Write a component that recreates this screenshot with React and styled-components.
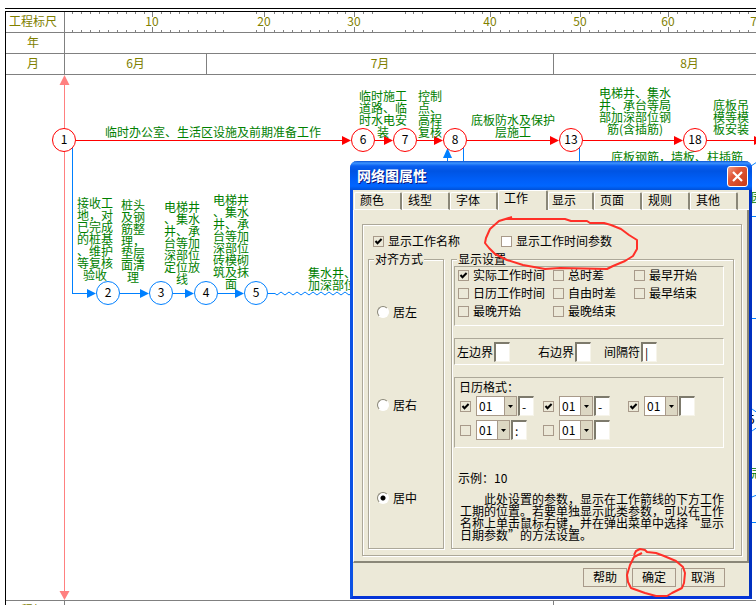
import React from "react";
import styled, { createGlobalStyle, css } from "styled-components";

const GlobalStyle = createGlobalStyle`
  * { box-sizing: border-box; }
  body {
    margin: 0;
    overflow: hidden;
    background: #fff;
    color: #000;
    font: 12px/12px "Noto Sans CJK SC", sans-serif;
  }
  button, input, select { font: inherit; color: inherit; margin: 0; padding: 0; }
`;

const GREY = "#808080";
const OLIVE = "#808000";
const GREEN = "#008000";
const RED = "#ff0000";
const BLUE = "#0080ff";
const PINK = "#ff8080";
const FACE = "#ece9d8";
const SHADE = "#aca899";

/* ---------- Chart sheet ---------- */

const Page = styled.main`
  position: relative;
  height: 100vh;
  overflow: hidden;
  padding: 8px 0 0 5px;
`;

const Sheet = styled.section`
  border-top: 1px solid #000;
  padding-top: 2px;
`;

const SheetFrame = styled.div`
  border-top: 1px solid #000;
  border-left: 1px solid #000;
`;

const ScaleRow = styled.div`
  display: grid;
  grid-template-columns: 59px minmax(0, 1fr);
  height: 21px;
  border-bottom: 1px solid ${GREY};
  color: ${OLIVE};
`;

const FooterRow = styled(ScaleRow)`
  border-top: 1px solid ${GREY};
`;

const ScaleName = styled.div`
  display: flex;
  align-items: center;
  justify-content: center;
  padding: 0 4px 2px 0;
  border-right: 1px solid ${GREY};
`;

const ScaleBody = styled.div`
  display: flex;
  overflow: hidden;
`;

const Month = styled.div`
  flex: 0 0 ${(p) => p.$width}px;
  display: flex;
  align-items: center;
  justify-content: center;
  padding-bottom: 2px;
  border-right: ${(p) => (p.$open ? "0" : `1px solid ${GREY}`)};
`;

const Ruler = styled.svg`
  display: block;
  flex: none;
  fill: ${OLIVE};
`;

const Canvas = styled.div`
  position: relative;
  height: 525px;
  overflow: hidden;
`;

const Network = styled.svg`
  display: block;
  font-size: 12px;
`;

const TaskLabel = styled.div`
  position: absolute;
  left: ${(p) => p.$x - 6}px;
  top: ${(p) => p.$y - 75}px;
  width: ${(p) => p.$w}px;
  color: ${GREEN};
  text-align: center;
  white-space: pre;
`;

const MAJORS = { 152: "10", 264: "20", 354: "30", 490: "40", 580: "50", 668: "60", 757: "70" };
const TICKS = [
  72, 81, 90, 99, 108, 117, 126, 135, 144, 152, 161, 170, 179, 188, 197, 206, 215, 223,
  256, 264, 274, 283, 292, 301, 310, 319, 328, 337, 345, 354, 363, 372, 405, 413, 422,
  455, 464, 473, 482, 490, 500, 509, 518, 527, 536, 545, 554, 563, 571, 580, 589, 598,
  606, 615, 624, 633, 642, 651, 660, 668, 677, 686, 694, 703, 712, 721, 730, 739, 748,
];

const TASKS = [
  [105, 126, 216, "临时办公室、生活区设施及前期准备工作"],
  [359, 90, 48, "临时施工\n道路、临\n时水电安\n装"],
  [418, 90, 24, "控制\n点、\n高程\n复核"],
  [471, 114, 84, "底板防水及保护\n层施工"],
  [599, 87, 72, "电梯井、集水\n井、承台等局\n部加深部位钢\n筋(含插筋)"],
  [713, 99, 36, "底板吊\n模等模\n板安装"],
  [611, 151, 132, "底板钢筋，墙板、柱插筋"],
  [77, 197, 36, "接收工\n地，对\n已完成\n的桩基\n、维护\n等复核\n验收"],
  [121, 199, 24, "桩头\n及钢\n筋整\n理，\n垫层\n面清\n理"],
  [164, 201, 36, "电梯井\n、集水\n井、承\n台等加\n深部位\n定位放\n线"],
  [213, 194, 36, "电梯井\n、集水\n井、承\n台等加\n深部位\n砖模砌\n筑及抹\n面"],
  [308, 267, 48, "集水井、\n加深部位"],
  [751, 191, 12, "园"],
  [751, 467, 12, "冠"],
];

const NODES = [
  [64, 140, "1", RED], [363, 140, "6", RED], [405, 140, "7", RED], [455, 140, "8", RED],
  [571, 140, "13", RED], [695, 140, "18", RED],
  [108, 293, "2", BLUE], [161, 293, "3", BLUE], [206, 293, "4", BLUE], [256, 293, "5", BLUE],
  [748, 420, "25", BLUE],
];

const ARROWS = [
  [76, 351, 140, RED], [375, 393, 140, RED], [417, 443, 140, RED], [467, 559, 140, RED],
  [583, 683, 140, RED], [707, 763, 140, RED],
  [72, 96, 293, BLUE], [120, 149, 293, BLUE], [173, 194, 293, BLUE], [218, 244, 293, BLUE],
];

const wave = (from, to) => {
  let d = `M268 293.5H${from}`;
  for (let x = from; x < to; x += 8) d += "q2 3 4 0t4 0";
  return d;
};

function NetworkChart() {
  return (
    <Network width="750" height="525" viewBox="6 75 750 525">
      <g fill="none" stroke={BLUE}>
        <path d="M72.5 148V293.5M463.5 148V200M579.5 148V200M447.5 157V200" />
        <path d={wave(275, 350)} />
        <path d="M748 168L757 162M748 216.5H757M748 318.5H757M748 498.5L757 495M748 522.5H757" />
      </g>
      <path d="M447.5 148L452 158H443Z" fill={BLUE} />
      <path d="M64.5 80V595" stroke={PINK} />
      <path d="M64.5 75L69.5 85H59.5ZM64.5 600L69.5 591H59.5Z" fill={PINK} />
      {ARROWS.map(([from, to, y, color]) => (
        <g key={`${from}-${y}`}>
          <path d={`M${from} ${y + 0.5}H${to - 4}`} stroke={color} />
          <path d={`M${to} ${y + 0.5}L${to - 9} ${y - 4}V${y + 5}Z`} fill={color} />
        </g>
      ))}
      {NODES.map(([x, y, name, color]) => (
        <g key={`${x}-${y}`}>
          <circle cx={x} cy={y} r="11.5" fill="#fff" stroke={color} />
          <text x={x} y={y + 4} textAnchor="middle">{name}</text>
        </g>
      ))}
    </Network>
  );
}

function Schedule() {
  return (
    <Sheet>
      <SheetFrame>
        <ScaleRow>
          <ScaleName>工程标尺</ScaleName>
          <ScaleBody>
            <Ruler width="700" height="20" viewBox="65 12 700 20">
              {TICKS.map((x) => (
                <path
                  key={x}
                  stroke={GREY}
                  d={MAJORS[x] ? `M${x + 0.5} 12v5m0 10v5` : `M${x + 0.5} 12v2m0 16v2`}
                />
              ))}
              {Object.entries(MAJORS).map(([x, name]) => (
                <text key={x} x={x} y="26" textAnchor="middle">{name}</text>
              ))}
            </Ruler>
          </ScaleBody>
        </ScaleRow>
        <ScaleRow>
          <ScaleName>年</ScaleName>
          <ScaleBody />
        </ScaleRow>
        <ScaleRow>
          <ScaleName>月</ScaleName>
          <ScaleBody>
            <Month $width={142}>6月</Month>
            <Month $width={347}>7月</Month>
            <Month $width={271} $open>8月</Month>
          </ScaleBody>
        </ScaleRow>
        <Canvas>
          <NetworkChart />
          {TASKS.map(([x, y, w, text]) => (
            <TaskLabel key={`${x}-${y}`} $x={x} $y={y} $w={w}>{text}</TaskLabel>
          ))}
        </Canvas>
        <FooterRow>
          <ScaleName>工程标尺</ScaleName>
          <ScaleBody>
            <Month $width={489} />
          </ScaleBody>
        </FooterRow>
      </SheetFrame>
    </Sheet>
  );
}

/* ---------- Dialog ---------- */

const Dialog = styled.section`
  position: absolute;
  isolation: isolate;
  left: 350px;
  top: 161px;
  width: 402px;
  border: 3px solid #0b51e4;
  border-top: 0;
  border-right-color: #0030c0;
  border-bottom-color: #0434d8;
  border-radius: 7px 7px 0 0;
  background: ${FACE};
`;

const TitleBar = styled.header`
  display: flex;
  align-items: center;
  justify-content: space-between;
  height: 29px;
  margin: 0 -3px;
  padding: 2px 4px 0 7px;
  border-radius: 7px 7px 0 0;
  background: linear-gradient(#0a4fd0 0, #3d95ff 2px, #0a5ff0 5px, #0054e3 10px, #0060fa 20px, #0066ff 25px, #0050d8 29px);
`;

const Title = styled.h1`
  margin: 0;
  padding-bottom: 4px;
  color: #fff;
  font-size: 14px;
  line-height: 16px;
  font-weight: 700;
  text-shadow: 1px 1px 0 #0a1883;
`;

const CloseButton = styled.button`
  display: flex;
  align-items: center;
  justify-content: center;
  width: 21px;
  height: 21px;
  border: 1px solid #fff;
  border-radius: 3px;
  background: linear-gradient(135deg, #f0a08a, #e2593a 35%, #c83a14);
`;

const Tabs = styled.nav`
  display: flex;
  align-items: flex-end;
  height: 20px;
  padding-left: 1px;
`;

const Tab = styled.button`
  flex: 0 0 48px;
  height: 18px;
  padding: 0 0 2px 5px;
  text-align: left;
  border: solid #fff;
  border-width: 1px 0 1px 1px;
  border-right: 2px solid #8a8778;
  border-radius: 2px 2px 0 0;
  background: ${FACE};
  ${(p) =>
    p.$active &&
    css`
      height: 20px;
      flex-basis: 50px;
      padding-bottom: 5px;
      border-bottom: 0;
    `}
  ${(p) => p.$narrow && css`flex-basis: 46px; padding-left: 3px;`}
`;

const TabLine = styled.span`
  flex: 1;
  border-bottom: 1px solid #fff;
`;

const TabPanel = styled.div`
  border-right: 2px solid #8a8778;
  border-bottom: 2px solid #8a8778;
  border-left: 1px solid #fff;
  padding: 14px 5px 5px 8px;
`;

const etched = css`
  border: 1px solid ${SHADE};
  box-shadow: inset 1px 1px 0 #fff, 1px 1px 0 #fff;
`;

const GroupBox = styled.div`
  ${etched}
  padding: 8px 7px 6px 5px;
`;

const TopChecks = styled.div`
  display: grid;
  grid-template-columns: 128px 1fr;
  padding-left: 5px;
  height: 19px;
`;

const Columns = styled.div`
  display: grid;
  grid-template-columns: 76px minmax(0, 1fr);
  gap: 7px;
`;

/* The frame is drawn through the middle of the legend, which sits above the padding box. */
const FieldSet = styled.fieldset`
  position: relative;
  min-width: 0;
  height: 297px;
  margin: 0;
  padding: 0 0 0 2px;
  border: 0;
  &::before {
    content: "";
    position: absolute;
    inset: -7px 0 0 0;
    ${etched}
  }
`;

const Legend = styled.legend`
  position: relative;
  z-index: 1;
  margin-left: 4px;
  padding: 0 1px;
  height: 14px;
  line-height: 14px;
  background: ${FACE};
`;

const RadioList = styled.div`
  position: relative;
  display: flex;
  flex-direction: column;
  gap: 77px;
  padding: 38px 0 0 7px;
`;

const Choice = styled.label`
  display: flex;
  align-items: center;
  gap: 4px;
  height: 16px;
  white-space: nowrap;
`;

const Check = styled.input.attrs({ type: "checkbox" })`
  appearance: none;
  flex: none;
  width: 11px;
  height: 11px;
  border: 1px solid #a89a8a;
  background: ${(p) => (p.$white ? "#fff" : FACE)};
  &:checked {
    background: ${FACE}
      url("data:image/svg+xml,%3Csvg xmlns='http://www.w3.org/2000/svg' viewBox='0 0 9 9'%3E%3Cpath d='M1.5 4l2 2.2L7.6 2' fill='none' stroke='black' stroke-width='2'/%3E%3C/svg%3E");
  }
`;

const Radio = styled.input.attrs({ type: "radio" })`
  appearance: none;
  width: 12px;
  height: 12px;
  border: 1px solid;
  border-color: #8a8778 #fff #fff #8a8778;
  border-radius: 50%;
  background: #fff;
  &:checked {
    background: radial-gradient(circle, #000 0 2px, #fff 3px);
  }
`;

const Settings = styled.div`
  position: relative;
  padding: 0 10px 0 1px;
`;

const Inset = styled.div`
  border: 1px solid;
  border-color: ${SHADE} #fff #fff ${SHADE};
`;

const OptionGrid = styled(Inset)`
  display: grid;
  grid-template-columns: 95px 81px 1fr;
  grid-auto-rows: 17px;
  row-gap: 1px;
  height: 60px;
  padding: 0 0 0 3px;
`;

const BoundsRow = styled(Inset)`
  display: flex;
  align-items: center;
  height: 27px;
  margin-top: 12px;
  padding-left: 2px;
`;

const BoundField = styled.label`
  display: flex;
  align-items: center;
  gap: 1px;
  margin-right: ${(p) => p.$after || 0}px;
`;

const TextBox = styled.input`
  width: 16px;
  height: 20px;
  padding-left: 2px;
  border: solid;
  border-width: 2px 1px 1px 2px;
  border-color: #7d7a6c #f6f4ea #f6f4ea #7d7a6c;
  background: #fff;
`;

const CalendarBox = styled(Inset)`
  height: 71px;
  margin-top: 12px;
  padding: 3px 0 0 4px;
`;

const FormatGrid = styled.div`
  display: grid;
  grid-template-columns: 83px 85px 1fr;
  row-gap: 4px;
  margin-top: 3px;
  padding-left: 1px;
`;

const FormatField = styled.div`
  display: flex;
  align-items: center;
  height: 20px;
  gap: 1px;
`;

const SelectBox = styled.span`
  position: relative;
  display: flex;
  width: ${(p) => (p.$wide ? 41 : 34)}px;
  height: 20px;
  margin-left: 4px;
  border: 1px solid #a89a8a;
  background: #fff;
  svg {
    position: absolute;
    right: 0;
    top: 0;
    pointer-events: none;
  }
`;

const Select = styled.select`
  appearance: none;
  width: 100%;
  border: 0;
  padding-left: 2px;
  background: transparent;
  line-height: 16px;
`;

const Example = styled.p`
  margin: 23px 0 0 4px;
  line-height: 14px;
`;

const Note = styled.p`
  margin: 8px 0 0 6px;
  white-space: pre;
`;

const Actions = styled.footer`
  display: flex;
  justify-content: flex-end;
  gap: 5px;
  height: 33px;
  padding: 5px 24px 0 0;
`;

const Button = styled.button`
  width: 44px;
  height: 19px;
  padding-bottom: 1px;
  border: 1px solid #a89a8a;
  background: ${FACE};
`;

const Mark = styled.svg`
  position: absolute;
  left: ${(p) => p.$x}px;
  top: ${(p) => p.$y}px;
  pointer-events: none;
  fill: none;
  stroke: #ff3028;
  stroke-width: 2;
  stroke-linejoin: round;
`;

const OPTIONS = [
  ["实际工作时间", true], ["总时差"], ["最早开始"],
  ["日历工作时间"], ["自由时差"], ["最早结束"],
  ["最晚开始"], ["最晚结束"],
];

const FORMATS = [
  { part: "年", on: true, sep: "-", wide: true },
  { part: "月", on: true, sep: "-" },
  { part: "日", on: true, sep: "" },
  { part: "时", sep: ":" },
  { part: "分", sep: "" },
];

function DateFormat({ part, on, sep, wide }) {
  return (
    <FormatField>
      <Check defaultChecked={on} aria-label={part} />
      <SelectBox $wide={wide}>
        <Select aria-label={`${part}格式`} defaultValue="01">
          <option>01</option>
        </Select>
        <svg width="12" height="18">
          <path d="M0 0H12V18H0Z" fill="#dcd7c3" />
          <path d="M.5 0V18" stroke="#a89a8a" />
          <path d="M4 8H9L6.500 11Z" fill="#000" />
        </svg>
      </SelectBox>
      <TextBox defaultValue={sep} aria-label={`${part}分隔`} />
    </FormatField>
  );
}

function PropertiesDialog() {
  return (
    <Dialog role="dialog" aria-labelledby="dialog-title">
      <TitleBar>
        <Title id="dialog-title">网络图属性</Title>
        <CloseButton aria-label="关闭">
          <svg width="13" height="13">
            <path d="M2 2L11 11M11 2L2 11" stroke="#fff" strokeWidth="2.200" />
          </svg>
        </CloseButton>
      </TitleBar>
      <Tabs>
        <Tab>颜色</Tab>
        <Tab>线型</Tab>
        <Tab>字体</Tab>
        <Tab $active>工作</Tab>
        <Tab $narrow>显示</Tab>
        <Tab>页面</Tab>
        <Tab>规则</Tab>
        <Tab>其他</Tab>
        <TabLine />
      </Tabs>
      <TabPanel>
        <GroupBox>
          <TopChecks>
            <Choice><Check defaultChecked />显示工作名称</Choice>
            <Choice><Check $white />显示工作时间参数</Choice>
          </TopChecks>
          <Columns>
            <FieldSet>
              <Legend>对齐方式</Legend>
              <RadioList>
                <Choice><Radio name="align" />居左</Choice>
                <Choice><Radio name="align" />居右</Choice>
                <Choice><Radio name="align" defaultChecked />居中</Choice>
              </RadioList>
            </FieldSet>
            <FieldSet>
              <Legend>显示设置</Legend>
              <Settings>
                <OptionGrid>
                  {OPTIONS.map(([name, on]) => (
                    <Choice key={name}><Check defaultChecked={on} />{name}</Choice>
                  ))}
                </OptionGrid>
                <BoundsRow>
                  <BoundField $after={28}>左边界<TextBox /></BoundField>
                  <BoundField $after={13}>右边界<TextBox /></BoundField>
                  <BoundField>间隔符<TextBox defaultValue="|" /></BoundField>
                </BoundsRow>
                <CalendarBox>
                  日历格式：
                  <FormatGrid>
                    {FORMATS.map((f) => <DateFormat key={f.part} {...f} />)}
                  </FormatGrid>
                </CalendarBox>
                <Example>示例：10</Example>
                <Note>
                  {"　　此处设置的参数，显示在工作箭线的下方工作\n工期的位置。若要单独显示此类参数，可以在工作\n名称上单击鼠标右键，并在弹出菜单中选择“显示\n日期参数”的方法设置。"}
                </Note>
              </Settings>
            </FieldSet>
          </Columns>
        </GroupBox>
      </TabPanel>
      <Actions>
        <Button>帮助</Button>
        <Button>确定</Button>
        <Button>取消</Button>
      </Actions>
    </Dialog>
  );
}

export default function App() {
  return (
    <>
      <GlobalStyle />
      <Page>
        <Schedule />
        <PropertiesDialog />
        <Mark $x={480} $y={210} width="165" height="65" viewBox="480 210 165 65">
          <path d="M512 217L499 221L490 229L486 238L485 243L489 248L495 254L507 260L523 265L545 269L560 268L607 269L613 266L625 261L633 256L637 249L637 240L629 235L621 229L611 225L604 223L590 223L587 221L571 221L565 219H506" />
        </Mark>
        <Mark $x={620} $y={542} width="70" height="60" viewBox="620 542 70 60">
          <path d="M634 555L636 551L640 549L645 550L647 552L656 553L664 556L676 561L683 567L685 573L684 583L682 588L672 593L667 596L656 596L645 593L631 588L628 582L627 575L630 565L634 557L642 553" />
        </Mark>
      </Page>
    </>
  );
}
